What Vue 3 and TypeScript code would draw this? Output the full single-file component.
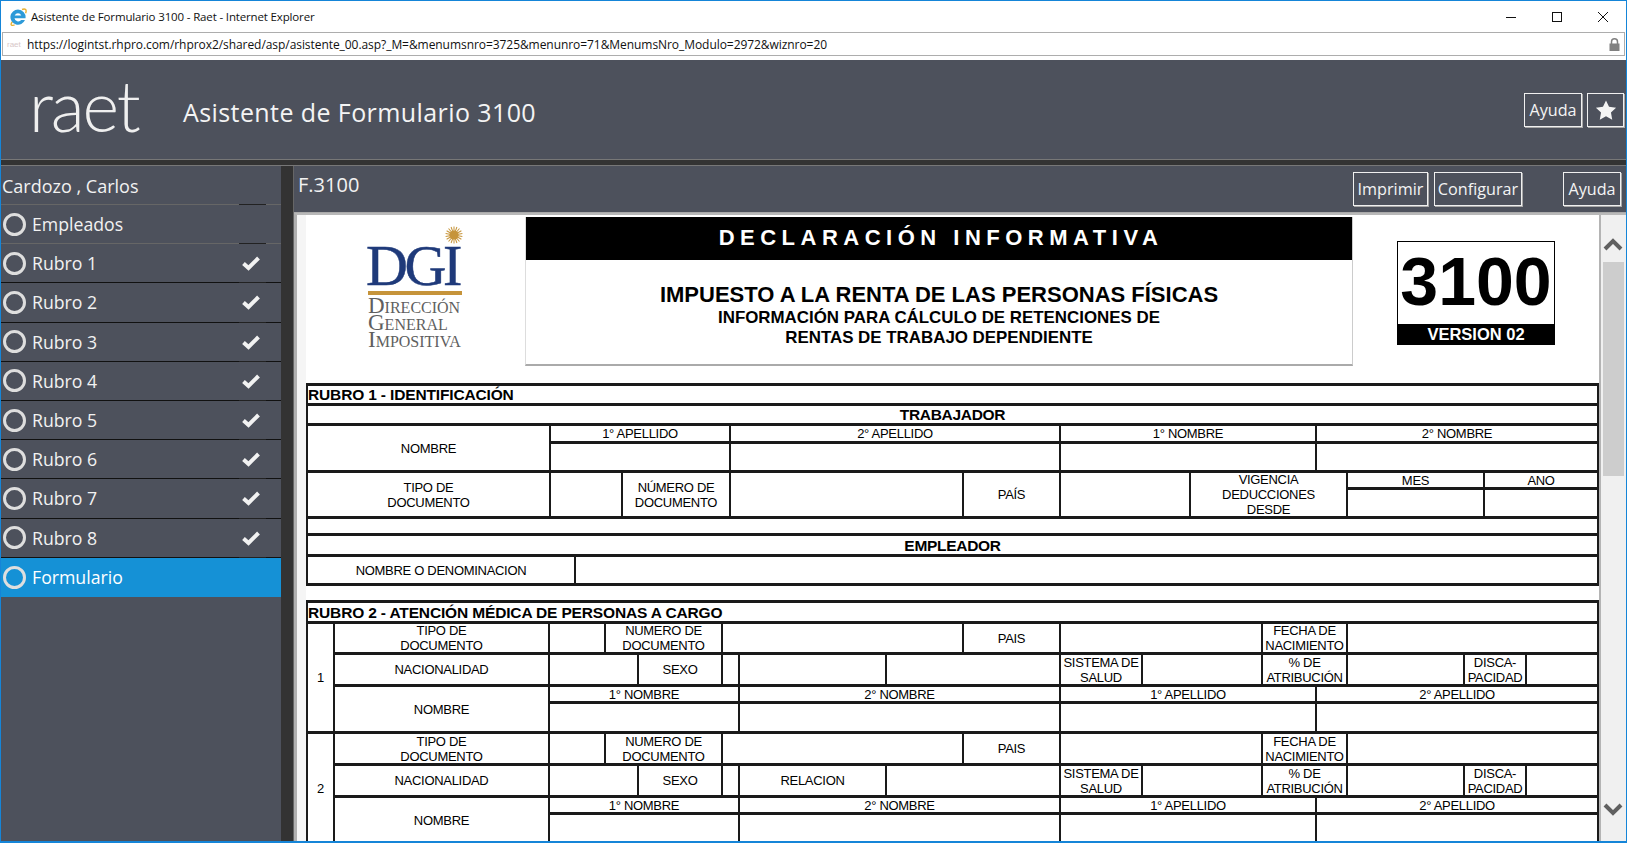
<template>
  <div class="window">
    <div class="titlebar">
      <svg class="ie-icon" width="18" height="18" viewBox="0 0 18 18">
        <path d="M3.6 13.5C0.8 16.6 2.2 18.2 5.6 16.8M13 1.5c3.4-1.3 5 .3 3.6 3.8" fill="none" stroke="#e8b030" stroke-width="1.4" />
        <path d="M9 1.5a7.6 7.6 0 1 0 7 10.6h-3.8a3.8 3.8 0 0 1-6.7-1.9h11A7.6 7.6 0 0 0 9 1.5zM5.7 7.5a3.6 3.6 0 0 1 6.6 0z" fill="#2d9ad8" />
      </svg>
      <span class="window-title">Asistente de Formulario 3100 - Raet - Internet Explorer</span>
      <div class="window-controls">
        <svg width="12" height="12" viewBox="0 0 12 12"><path d="M1 6.5h10" stroke="#111" fill="none" /></svg>
        <svg width="12" height="12" viewBox="0 0 12 12"><rect x="1.5" y="1.5" width="9" height="9" stroke="#111" fill="none" /></svg>
        <svg width="12" height="12" viewBox="0 0 12 12"><path d="M1 1l10 10M11 1L1 11" stroke="#111" fill="none" /></svg>
      </div>
    </div>

    <div class="addressbar">
      <span class="favicon">raet</span>
      <span class="url">https://logintst.rhpro.com/rhprox2/shared/asp/asistente_00.asp?_M=&amp;menumsnro=3725&amp;menunro=71&amp;MenumsNro_Modulo=2972&amp;wiznro=20</span>
      <svg class="lock" width="11" height="13" viewBox="0 0 11 13">
        <path d="M2.5 6V3.8a3 3 0 0 1 6 0V6" fill="none" stroke="#808080" stroke-width="1.5" />
        <rect x="0.5" y="5.5" width="10" height="7.5" fill="#808080" />
      </svg>
    </div>

    <header class="app-header">
      <span class="logo">raet</span>
      <h1 class="app-title">Asistente de Formulario 3100</h1>
      <div class="header-actions">
        <button class="btn btn-ayuda">Ayuda</button>
        <button class="btn btn-star">
          <svg width="22" height="22" viewBox="0 0 24 24"><path d="M12 1.5l3.3 7 7.7 1-5.6 5.3 1.4 7.7-6.8-3.7-6.8 3.7 1.4-7.7L1 9.5l7.7-1z" fill="#f4f4f4" /></svg>
        </button>
      </div>
    </header>
    <div class="header-rule"></div>

    <div class="body">
      <aside class="sidebar">
        <div class="person">Cardozo , Carlos</div>
        <div
          v-for="item in steps"
          :key="item.label"
          class="step"
          :class="{ current: item.current, 'soft-line': item.label === 'Empleados' }"
        >
          <span class="ring"></span>
          <span class="step-label">{{ item.label }}</span>
          <svg v-if="item.done" class="check" width="20" height="16" viewBox="0 0 20 16">
            <path d="M2.5 8.5l5 4.5L17.5 3" fill="none" stroke="#f2f2f2" stroke-width="4" />
          </svg>
        </div>
      </aside>
      <div class="gutter"></div>

      <main class="main">
        <div class="toolbar">
          <span class="form-code">F.3100</span>
          <button class="btn btn-imprimir">Imprimir</button>
          <button class="btn btn-config">Configurar</button>
          <button class="btn btn-ayuda2">Ayuda</button>
        </div>

        <div class="content">
          <div class="form">
            <section class="form-head">
              <div class="dgi">
                <svg class="sun" width="18" height="18" viewBox="0 0 18 18">
                  <g stroke="#c6943a" stroke-width="1">
                    <path v-for="a in sunRays" :key="a" d="M9 0.5V17.5" :transform="`rotate(${a} 9 9)`" />
                  </g>
                  <circle cx="9" cy="9" r="4.6" fill="#c6943a" />
                </svg>
                <div class="dgi-mark">DGI</div>
                <div class="dgi-bar"></div>
                <div class="dgi-name">Dirección<br />General<br />Impositiva</div>
              </div>

              <div class="declaration">
                <div class="band">DECLARACIÓN INFORMATIVA</div>
                <div class="tax-title">IMPUESTO A LA RENTA DE LAS PERSONAS FÍSICAS</div>
                <div class="tax-sub">INFORMACIÓN PARA CÁLCULO DE RETENCIONES DE<br />RENTAS DE TRABAJO DEPENDIENTE</div>
              </div>

              <div class="number-wrap">
                <div class="number-box">
                  <div class="number">3100</div>
                  <div class="version">VERSION 02</div>
                </div>
              </div>
            </section>

            <table v-for="(tbl, n) in tables" :key="n" class="grid-table">
              <colgroup>
                <col v-for="(w, i) in tbl.cols" :key="i" :style="{ width: w + 'px' }" />
              </colgroup>
              <tbody>
                <tr v-for="(row, i) in tbl.rows" :key="i" :style="{ height: row.h + 'px' }">
                  <td
                    v-for="(cell, j) in row.cells"
                    :key="j"
                    :colspan="cell.c || 1"
                    :rowspan="cell.r || 1"
                    :class="cell.k"
                  >
                    <div v-if="cell.t" class="txt">{{ cell.t }}</div>
                  </td>
                </tr>
              </tbody>
            </table>
          </div>

          <div class="scrollbar">
            <svg width="20" height="14" viewBox="0 0 20 14"><path d="M2 12l8-8 8 8" fill="none" stroke="#606060" stroke-width="4" /></svg>
            <div class="thumb"></div>
            <svg class="down" width="20" height="14" viewBox="0 0 20 14"><path d="M2 2l8 8 8-8" fill="none" stroke="#606060" stroke-width="4" /></svg>
          </div>
        </div>
      </main>
    </div>
  </div>
</template>

<script setup lang="ts">
interface Cell {
  t?: string
  c?: number
  r?: number
  k?: string
}

interface Row {
  h: number
  cells: Cell[]
}

const steps = [
  { label: 'Empleados', done: false, current: false },
  ...[1, 2, 3, 4, 5, 6, 7, 8].map((n) => ({ label: `Rubro ${n}`, done: true, current: false })),
  { label: 'Formulario', done: false, current: true }
]

const sunRays = [0, 20, 40, 60, 80, 100, 120, 140, 160]

const rubro1: Row[] = [
  { h: 20, cells: [{ t: 'RUBRO 1 - IDENTIFICACIÓN', c: 11, k: 'title' }] },
  { h: 20, cells: [{ t: 'TRABAJADOR', c: 11, k: 'strong' }] },
  {
    h: 18,
    cells: [
      { t: 'NOMBRE', r: 2 },
      { t: '1° APELLIDO', c: 3 },
      { t: '2° APELLIDO', c: 2 },
      { t: '1° NOMBRE', c: 2 },
      { t: '2° NOMBRE', c: 3 }
    ]
  },
  { h: 29, cells: [{ c: 3 }, { c: 2 }, { c: 2 }, { c: 3 }] },
  {
    h: 17,
    cells: [
      { t: 'TIPO DE\nDOCUMENTO', r: 2 },
      { c: 2, r: 2 },
      { t: 'NÚMERO DE\nDOCUMENTO', r: 2 },
      { r: 2 },
      { t: 'PAÍS', r: 2 },
      { r: 2 },
      { t: 'VIGENCIA\nDEDUCCIONES\nDESDE', c: 2, r: 2 },
      { t: 'MES' },
      { t: 'ANO' }
    ]
  },
  { h: 29, cells: [{}, {}] },
  { h: 17, cells: [{ c: 11 }] },
  { h: 21, cells: [{ t: 'EMPLEADOR', c: 11, k: 'strong' }] },
  { h: 29, cells: [{ t: 'NOMBRE O DENOMINACION', c: 2 }, { c: 9 }] }
]

function person(num: string, relation: string, heights: number[]): Row[] {
  return [
    {
      h: heights[0],
      cells: [
        { t: num, r: 4 },
        { t: 'TIPO DE\nDOCUMENTO' },
        {},
        { t: 'NUMERO DE\nDOCUMENTO', c: 2 },
        { c: 3 },
        { t: 'PAIS' },
        { c: 2 },
        { t: 'FECHA DE\nNACIMIENTO', c: 2 },
        { c: 3 }
      ]
    },
    {
      h: heights[1],
      cells: [
        { t: 'NACIONALIDAD' },
        { c: 2 },
        { t: 'SEXO' },
        {},
        { t: relation },
        { c: 2 },
        { t: 'SISTEMA DE\nSALUD' },
        {},
        { t: '% DE\nATRIBUCIÓN', c: 2 },
        {},
        { t: 'DISCA-\nPACIDAD' },
        {}
      ]
    },
    {
      h: heights[2],
      cells: [
        { t: 'NOMBRE', r: 2 },
        { t: '1° NOMBRE', c: 4 },
        { t: '2° NOMBRE', c: 3 },
        { t: '1° APELLIDO', c: 3 },
        { t: '2° APELLIDO', c: 4 }
      ]
    },
    { h: heights[3], cells: [{ c: 4 }, { c: 3 }, { c: 3 }, { c: 4 }] }
  ]
}

const rubro2: Row[] = [
  { h: 21, cells: [{ t: 'RUBRO 2 - ATENCIÓN MÉDICA DE PERSONAS A CARGO', c: 16, k: 'title' }] },
  ...person('1', '', [31, 32, 17, 30]),
  ...person('2', 'RELACION', [32, 32, 17, 30])
]

const tables = [
  { cols: [243, 25, 47, 108, 233, 97, 130, 126, 31, 137, 114], rows: rubro1 },
  { cols: [27, 215, 56, 33, 84, 17, 147, 77, 97, 82, 120, 54, 31, 117, 62, 72], rows: rubro2 }
]
</script>

<style>
html,
body {
  margin: 0;
  overflow: hidden;
}
</style>

<style scoped>
.window {
  box-sizing: border-box;
  width: 1627px;
  height: 843px;
  display: flex;
  flex-direction: column;
  border: 1px solid #1585d8;
  border-bottom-width: 2px;
  background: #fff;
  font-family: 'Open Sans', 'Noto Sans', sans-serif;
  overflow: hidden;
}

.titlebar {
  height: 31px;
  flex: none;
  display: flex;
  align-items: center;
  padding-left: 8px;
}

.ie-icon {
  margin-right: 4px;
}

.window-title {
  font-size: 11.5px;
  letter-spacing: -0.15px;
  color: #111;
}

.window-controls {
  margin-left: auto;
  display: flex;
  gap: 34px;
  padding-right: 17px;
}

.addressbar {
  box-sizing: border-box;
  height: 24px;
  flex: none;
  margin: 0 0 0 1px;
  width: 1623px;
  border: 1px solid #adadad;
  display: flex;
  align-items: center;
  padding: 0 4px 0 4px;
}

.favicon {
  width: 20px;
  font-size: 8px;
  color: #d8c8c8;
  font-family: 'Liberation Sans', sans-serif;
}

.url {
  font-size: 12px;
  letter-spacing: -0.06px;
  color: #111;
  white-space: nowrap;
}

.lock {
  margin-left: auto;
}

.app-header {
  margin-top: 4px;
  height: 99px;
  flex: none;
  background: #4d515c;
  display: flex;
  align-items: center;
  padding-left: 28px;
  padding-right: 2px;
}

.logo {
  width: 154px;
  font-family: Lato, sans-serif;
  font-weight: 300;
  font-size: 70px;
  line-height: 80px;
  letter-spacing: -2.2px;
  color: #efefef;
  margin-top: -9px;
}

.app-title {
  margin: 5px 0 0;
  font-weight: 400;
  font-size: 25px;
  letter-spacing: 0.41px;
  color: #f4f4f4;
  font-family: 'Open Sans', sans-serif;
}

.header-actions {
  margin-left: auto;
  display: flex;
  gap: 5px;
}

.btn {
  box-sizing: border-box;
  height: 34px;
  padding: 0;
  background: transparent;
  border: 1px solid #f0f0f0;
  box-shadow: 1px 1px 0 #a8a8a8;
  color: #f4f4f4;
  font-family: 'Open Sans', sans-serif;
  font-size: 16.2px;
  display: flex;
  align-items: center;
  justify-content: center;
}

.btn-ayuda,
.btn-ayuda2 {
  width: 58px;
}

.btn-star {
  width: 37px;
}

.btn-imprimir {
  width: 75px;
}

.btn-config {
  width: 88px;
  margin-left: 6px;
}

.btn-ayuda2 {
  margin-left: 41px;
}

.header-rule {
  flex: none;
  box-sizing: border-box;
  height: 7px;
  background: #333;
  border-top: 1px solid #777;
  border-bottom: 1px solid #777;
}

.body {
  flex: 1;
  min-height: 0;
  display: flex;
}

.sidebar {
  width: 280px;
  flex: none;
  background: #4d515c;
  color: #f2f2f2;
}

.person {
  box-sizing: border-box;
  height: 39px;
  padding-left: 1px;
  font-size: 18px;
  line-height: 40px;
  border-bottom: 1px solid #666;
  position: relative;
}

.person::after,
.step::after {
  content: '';
  position: absolute;
  left: 238px;
  bottom: -1px;
  width: 27px;
  height: 1px;
  background: #222;
}

.step {
  box-sizing: border-box;
  height: 39.2px;
  position: relative;
  display: flex;
  align-items: center;
  padding-left: 2px;
  border-bottom: 1px solid #111;
  font-size: 17.7px;
}

.step.soft-line {
  border-bottom-color: #666;
}

.step.current {
  background: #1591d6;
  color: #fff;
  border-bottom: none;
}

.step.current::after {
  display: none;
}

.ring {
  box-sizing: border-box;
  width: 23px;
  height: 23px;
  border: 3px solid #dedede;
  border-radius: 50%;
  margin-right: 6px;
}

.check {
  position: absolute;
  left: 240px;
  top: 11px;
}

.gutter {
  width: 12px;
  flex: none;
  background: #333;
  border-right: 1px solid #666;
}

.main {
  flex: 1;
  min-width: 0;
  display: flex;
  flex-direction: column;
  background: #4d515c;
}

.toolbar {
  box-sizing: border-box;
  height: 47px;
  flex: none;
  display: flex;
  align-items: center;
  padding-right: 5px;
  padding-left: 4px;
  border-bottom: 1px solid #aaa;
}

.form-code {
  font-size: 20px;
  color: #f2f2f2;
  margin-right: auto;
  margin-top: -10px;
}

.content {
  flex: 1;
  min-height: 0;
  display: flex;
  border-top: 2px solid #b8b8b8;
  border-left: 3px solid #b0b0b0;
  background: #f5f5f5;
}

.form {
  flex: 1;
  min-width: 0;
  margin-left: 9px;
  padding-top: 2px;
  background: #fff;
  overflow: hidden;
  font-family: 'Liberation Sans', Arial, sans-serif;
  color: #000;
}

.form-head {
  display: flex;
  height: 149px;
}

.dgi {
  width: 219px;
  flex: none;
  box-sizing: border-box;
  padding: 9px 0 0 60px;
  position: relative;
}

.sun {
  position: absolute;
  left: 139px;
  top: 9px;
}

.dgi-mark {
  margin-top: 16px;
  font-family: 'Liberation Serif', serif;
  font-size: 58px;
  line-height: 48px;
  letter-spacing: -3.4px;
  -webkit-text-stroke: 0.5px #1f3a7a;
  color: #1f3a7a;
}

.dgi-bar {
  width: 94px;
  height: 4px;
  margin: 1px 0 0 2px;
  background: #c6943a;
}

.dgi-name {
  margin: 2px 0 0 2px;
  font-family: 'Liberation Serif', serif;
  font-variant: small-caps;
  font-size: 23px;
  line-height: 17px;
  color: #5f5f5f;
}

.declaration {
  width: 828px;
  flex: none;
  box-sizing: border-box;
  border-left: 1px solid #ddd;
  border-right: 1px solid #ccc;
  border-bottom: 2px solid #aaa;
  text-align: center;
}

.band {
  height: 43px;
  padding-left: 4px;
  background: #000;
  color: #fff;
  font-weight: 700;
  font-size: 22px;
  line-height: 42px;
  letter-spacing: 5.5px;
}

.tax-title {
  margin-top: 23px;
  font-weight: 700;
  font-size: 22px;
  line-height: 24px;
  color: #000;
}

.tax-sub {
  margin-top: 1px;
  font-weight: 700;
  font-size: 16.9px;
  line-height: 20px;
}

.number-wrap {
  flex: 1;
  display: flex;
  justify-content: center;
  padding-top: 24px;
}

.number-box {
  box-sizing: border-box;
  width: 158px;
  height: 104px;
  border: 1px solid #000;
  display: flex;
  flex-direction: column;
  text-align: center;
}

.number {
  flex: 1;
  font-weight: 700;
  font-size: 68px;
  line-height: 78px;
}

.version {
  height: 20px;
  background: #000;
  color: #fff;
  font-weight: 700;
  font-size: 16.5px;
  line-height: 20px;
}

.grid-table {
  table-layout: fixed;
  width: 1291px;
  margin: 17px 0 0 0;
  border-collapse: collapse;
  font-size: 13px;
  letter-spacing: -0.3px;
}

.grid-table + .grid-table {
  margin-top: 14px;
}

.grid-table td {
  border-style: solid;
  border-color: #1a1a1a;
  border-width: 3px 2px;
  padding: 0;
  text-align: center;
  vertical-align: middle;
  overflow: visible;
}

.txt {
  white-space: pre-line;
  line-height: 15px;
  margin: -2px 0;
}

.grid-table td.title {
  text-align: left;
  font-weight: 700;
  font-size: 15.5px;
  letter-spacing: -0.15px;
}

.grid-table td.strong {
  font-weight: 700;
  font-size: 15.5px;
}

.scrollbar {
  width: 27px;
  flex: none;
  box-sizing: border-box;
  border-left: 2px solid #b4b4b4;
  background: #f0f0f0;
  display: flex;
  flex-direction: column;
  align-items: center;
  padding: 22px 1px 24px 0;
}

.thumb {
  width: 21px;
  height: 214px;
  margin-top: 11px;
  background: #cdcdcd;
}

.down {
  margin-top: auto;
}
</style>
